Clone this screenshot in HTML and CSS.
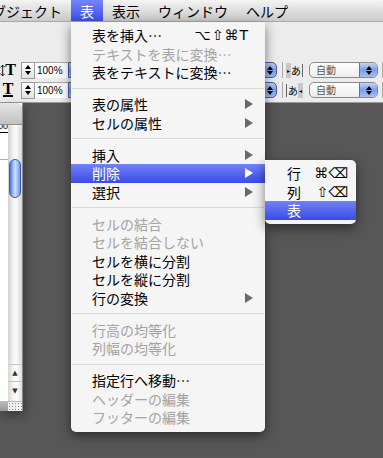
FILE: index.html
```html
<!DOCTYPE html>
<html lang="ja">
<head>
  <meta charset="UTF-8" />
  <title>表メニュー</title>
  <link rel="stylesheet" href="styles.css">
</head>
<body>
  <div class="menubar">
    <span class="mb-item first">オブジェクト</span>
    <span class="mb-item active">表</span>
    <span class="mb-item">表示</span>
    <span class="mb-item">ウィンドウ</span>
    <span class="mb-item">ヘルプ</span>
  </div>

  <div class="toolbar">
    <div class="row">
      <span class="ticon">
        <svg width="6" height="13" viewBox="0 0 6 13"><path d="M3 0.5V12.5M0.5 3L3 0.5L5.5 3M0.5 10L3 12.5L5.5 10" stroke="#000" stroke-width="1" fill="none"/></svg>
        <b>T</b>
      </span>
      <span class="stepper"><i class="up"></i><i class="dn"></i></span>
      <span class="field">100%</span>
      <span class="pop-long"><i class="up"></i><i class="dn"></i></span>
      <span class="vsep"></span>
      <span class="kana"><em>▸</em>あ<s></s></span>
      <span class="popup"><span class="ptext">自動</span><span class="pbtn"><i class="up"></i><i class="dn"></i></span></span>
      <span class="vsep"></span>
    </div>
    <div class="row">
      <span class="ticon under"><b>T</b></span>
      <span class="stepper"><i class="up"></i><i class="dn"></i></span>
      <span class="field">100%</span>
      <span class="pop-long"><i class="up"></i><i class="dn"></i></span>
      <span class="vsep"></span>
      <span class="kana rev"><s></s>あ<em>◂</em></span>
      <span class="popup"><span class="ptext">自動</span><span class="pbtn"><i class="up"></i><i class="dn"></i></span></span>
      <span class="vsep"></span>
    </div>
  </div>

  <div class="work">
    <div class="docwin">
      <div class="dtitle"></div>
      <div class="dbody">
        <div class="page">
          <div class="ruler"><span>100</span></div>
          <div class="guide"></div>
        </div>
        <div class="vscroll">
          <div class="track"><div class="thumb"></div></div>
          <div class="sbtn">▲</div>
          <div class="sbtn down">▼</div>
        </div>
      </div>
      <div class="dfoot">
        <span class="hscroll"></span>
        <span class="grip"></span>
      </div>
    </div>
  </div>

  <div class="menu">
    <div class="item"><span class="label">表を挿入…</span><span class="key">⌥⇧⌘T</span></div>
    <div class="item off"><span class="label">テキストを表に変換…</span></div>
    <div class="item"><span class="label">表をテキストに変換…</span></div>
    <div class="sep"></div>
    <div class="item"><span class="label">表の属性</span><span class="arrow"></span></div>
    <div class="item"><span class="label">セルの属性</span><span class="arrow"></span></div>
    <div class="sep"></div>
    <div class="item"><span class="label">挿入</span><span class="arrow"></span></div>
    <div class="item on"><span class="label">削除</span><span class="arrow"></span></div>
    <div class="item"><span class="label">選択</span><span class="arrow"></span></div>
    <div class="sep"></div>
    <div class="item off"><span class="label">セルの結合</span></div>
    <div class="item off"><span class="label">セルを結合しない</span></div>
    <div class="item"><span class="label">セルを横に分割</span></div>
    <div class="item"><span class="label">セルを縦に分割</span></div>
    <div class="item"><span class="label">行の変換</span><span class="arrow"></span></div>
    <div class="sep"></div>
    <div class="item off"><span class="label">行高の均等化</span></div>
    <div class="item off"><span class="label">列幅の均等化</span></div>
    <div class="sep"></div>
    <div class="item"><span class="label">指定行へ移動…</span></div>
    <div class="item off"><span class="label">ヘッダーの編集</span></div>
    <div class="item off"><span class="label">フッターの編集</span></div>
  </div>

  <div class="submenu">
    <div class="item"><span class="label">行</span><span class="key">⌘⌫</span></div>
    <div class="item"><span class="label">列</span><span class="key">⇧⌫</span></div>
    <div class="item on"><span class="label">表</span></div>
  </div>
</body>
</html>
```

FILE: styles.css
```css
body {
  margin: 0;
  width: 383px;
  height: 458px;
  overflow: hidden;
  background: #575757;
  font-family: "Noto Sans CJK JP", "Noto Sans", sans-serif;
  position: relative;
}

/* menu bar */
.menubar {
  height: 22px;
  display: flex;
  white-space: nowrap;
  overflow: hidden;
  background: linear-gradient(#f4f4f4, #dedede 50%, #cbcbcb);
  border-bottom: 1px solid #a9a9a9;
  box-sizing: border-box;
}
.mb-item {
  padding: 0 9px;
  font-size: 14px;
  line-height: 22px;
  color: #000;
}
.mb-item.first { margin-left: -31px; }
.mb-item.active {
  background: linear-gradient(#7484f7, #3d4ee8);
  color: #fff;
}

/* tool bar */
.toolbar {
  height: 81px;
  box-sizing: border-box;
  padding-top: 40px;
  background: #ececec;
  border-bottom: 1px solid #9a9a9a;
  display: flex;
  flex-direction: column;
  gap: 4px;
}
.row {
  height: 16px;
  display: flex;
  align-items: center;
}
.ticon {
  width: 16px;
  height: 14px;
  margin-right: 5px;
  display: flex;
  align-items: center;
  justify-content: center;
  font-family: "Liberation Serif", serif;
  font-size: 16px;
  line-height: 14px;
}
.ticon.under b { border-bottom: 2px solid #000; line-height: 12px; }
.stepper {
  width: 12px;
  height: 15px;
  border: 1px solid #9c9c9c;
  background: linear-gradient(#fff, #e2e2e2);
  display: flex;
  flex-direction: column;
  align-items: center;
  justify-content: center;
  gap: 2px;
}
.up, .dn {
  display: block;
  width: 0;
  height: 0;
  border-left: 3px solid transparent;
  border-right: 3px solid transparent;
}
.up { border-bottom: 4px solid #000; }
.dn { border-top: 4px solid #000; }
.field {
  width: 33px;
  height: 16px;
  box-sizing: border-box;
  background: #fff;
  border-top: 1px solid #a8a8a8;
  padding-left: 2px;
  font-family: "Liberation Sans", sans-serif;
  font-size: 10px;
  line-height: 15px;
}
.pop-long {
  width: 209px;
  height: 16px;
  box-sizing: border-box;
  border: 1px solid #4a5aa8;
  border-radius: 0 5px 5px 0;
  background: linear-gradient(#bcd0f4, #7f9fe6 50%, #9ec0f4);
  display: flex;
  flex-direction: column;
  align-items: flex-end;
  justify-content: center;
  gap: 1px;
  padding-right: 3px;
}
.vsep {
  width: 1px;
  height: 16px;
  background: #a8a8a8;
  margin-left: 5px;
}
.kana {
  margin-left: 3px;
  height: 15px;
  display: flex;
  align-items: center;
  font-size: 10px;
  line-height: 15px;
}
.kana em {
  font-style: normal;
  font-size: 6px;
  background: #c8c8c8;
  width: 5px;
  height: 15px;
  text-align: center;
}
.kana s {
  width: 1px;
  height: 13px;
  background: #666;
  margin-left: 1px;
}
.kana.rev s { margin: 0 1px 0 0; }
.popup {
  margin-left: 6px;
  width: 69px;
  height: 16px;
  box-sizing: border-box;
  border: 1px solid #8a8a8a;
  border-radius: 5px;
  background: linear-gradient(#fff, #ececec);
  display: flex;
  overflow: hidden;
}
.ptext {
  flex: 1;
  padding-left: 6px;
  font-size: 10px;
  line-height: 14px;
  color: #555;
}
.pbtn {
  width: 17px;
  background: linear-gradient(#c2d4f6, #7c9ce6 50%, #a2c2f4);
  border-left: 1px solid #6070b8;
  display: flex;
  flex-direction: column;
  align-items: center;
  justify-content: center;
  gap: 1px;
}
.row .vsep:last-child { margin-left: 4px; }

/* document window */
.work {
  display: flex;
}
.docwin {
  width: 23px;
  height: 308px;
  background: #fff;
  border-right: 1px solid #8c8c8c;
  box-sizing: border-box;
  box-shadow: 2px 4px 10px rgba(0, 0, 0, 0.35);
  display: flex;
  flex-direction: column;
}
.dtitle {
  height: 22px;
  background: linear-gradient(#e4e4e4, #c2c2c2);
  border-bottom: 1px solid #8e8e8e;
  border-radius: 0 5px 0 0;
  box-sizing: border-box;
}
.dbody {
  flex: 1;
  display: flex;
}
.page {
  width: 8px;
  overflow: hidden;
}
.ruler {
  height: 7px;
  border-bottom: 1px solid #000;
  position: relative;
}
.ruler span {
  position: absolute;
  right: 0;
  top: -4px;
  font-family: "Liberation Sans", sans-serif;
  font-size: 9px;
  line-height: 10px;
}
.guide {
  margin-top: 26px;
  height: 1px;
  background: #d89ac4;
}
.vscroll {
  width: 14px;
  display: flex;
  flex-direction: column;
  background: linear-gradient(90deg, #d6d6d6, #f6f6f6 40%, #fff 60%, #dcdcdc);
}
.track {
  flex: 1;
  padding-top: 34px;
  border-radius: 7px;
  background: linear-gradient(90deg, #cfcfcf, #f3f3f3 35%, #fafafa 60%, #d4d4d4);
}
.thumb {
  width: 12px;
  height: 39px;
  margin-left: 1px;
  border-radius: 6px;
  border: 1px solid #3d58b8;
  box-sizing: border-box;
  background: linear-gradient(90deg, #4c72d8, #a6c6f8 35%, #c9defb 55%, #6f98e6);
}
.sbtn {
  height: 17px;
  font-size: 7px;
  line-height: 17px;
  text-align: center;
  color: #333;
  border-top: 1px solid #c4c4c4;
  box-sizing: border-box;
  font-family: "DejaVu Sans", sans-serif;
}
.sbtn.down { height: 20px; line-height: 18px; }
.dfoot {
  height: 9px;
  display: flex;
  border-top: 1px solid #b8b8b8;
}
.hscroll {
  width: 8px;
  background: linear-gradient(#b8b8b8, #999);
}
.grip {
  flex: 1;
  background: radial-gradient(circle, #888 0.6px, transparent 0.8px) 0 0 / 3px 3px, #f0f0f0;
}

/* pull-down menus */
.menu {
  position: absolute;
  left: 71px;
  top: 22px;
  width: 194px;
  padding: 4px 0 5px;
  background: #f5f5f5;
  border-radius: 0 0 5px 5px;
  box-shadow: 0 4px 12px rgba(0, 0, 0, 0.5);
}
.submenu {
  position: absolute;
  left: 265px;
  top: 160px;
  width: 91px;
  padding: 4px 0;
  background: #f5f5f5;
  border-radius: 0 5px 5px 5px;
  box-shadow: 0 4px 12px rgba(0, 0, 0, 0.5);
}
.item {
  height: 18.5px;
  display: flex;
  align-items: center;
  padding: 0 12px 0 21px;
  font-size: 14px;
  line-height: 18px;
  color: #000;
  white-space: nowrap;
}
.submenu .item { padding: 0 8px 0 22px; }
.label { flex: 1; }
.key {
  font-family: "DejaVu Sans", sans-serif;
  font-size: 14px;
  letter-spacing: 1px;
  margin-right: 4px;
}
.submenu .key { margin-right: 0; letter-spacing: 0; }
.arrow {
  width: 0;
  height: 0;
  border-left: 8px solid #6a6a6a;
  border-top: 5px solid transparent;
  border-bottom: 5px solid transparent;
}
.item.off { color: #a3a3a3; }
.item.on {
  background: linear-gradient(#7282f6, #3a4be6);
  color: #fff;
}
.item.on .arrow { border-left-color: #fff; }
.sep {
  height: 13.5px;
  display: flex;
  align-items: center;
}
.sep::after {
  content: "";
  flex: 1;
  height: 1px;
  margin: 0 1px;
  background: #dadada;
}
```
